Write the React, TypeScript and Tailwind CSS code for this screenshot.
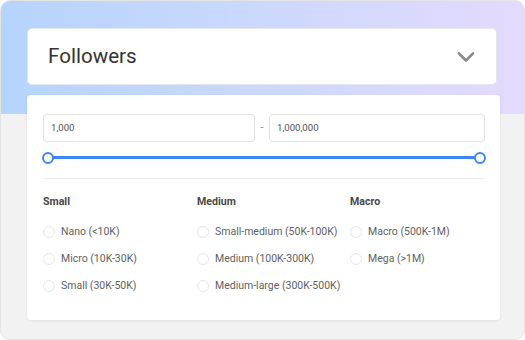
const groups = [
  { title: "Small", items: ["Nano (<10K)", "Micro (10K-30K)", "Small (30K-50K)"] },
  { title: "Medium", items: ["Small-medium (50K-100K)", "Medium (100K-300K)", "Medium-large (300K-500K)"] },
  { title: "Macro", items: ["Macro (500K-1M)", "Mega (>1M)"] },
];

const App = () => {
  return (
    <div className="w-[525px] h-[340px] bg-white font-['Roboto',sans-serif]">
      <div className="relative w-[525px] h-[340px] rounded-[10px] border border-[#e4e4e4] bg-[#f2f2f2] overflow-hidden">
        <div className="absolute inset-x-0 top-0 h-[113px] bg-[linear-gradient(to_right,#b5d4fd,#c9d8fc_45%,#e4dafd)]" />

        <div className="relative pt-[27px] pl-[26px]">
          <div className="w-[470px] h-[57px] bg-white rounded-[5px] border border-[#e6e6ee] flex items-center justify-between pl-[20px] pr-[21px]">
            <span className="text-[20.6px] text-[#333]">Followers</span>
            <svg width="18" height="12" viewBox="0 0 18 12" fill="none">
              <path d="M2 2.5 L9 9.5 L16 2.5" stroke="#8a8a92" strokeWidth="2.6" strokeLinecap="round" strokeLinejoin="round" />
            </svg>
          </div>

          <div className="mt-[10px] w-[473px] h-[225px] bg-white rounded-[4px] shadow-[0_1px_3px_rgba(0,0,0,0.08)] pl-[16px] pr-[15px] pt-[19px]">
            <div className="flex items-center">
              <div className="w-[212px] h-[28px] rounded-[4px] border border-[#e2e2e2] flex items-center pl-[7px] text-[9.6px] text-[#555]">
                1,000
              </div>
              <div className="w-[14px] text-center text-[11px] text-[#888]">-</div>
              <div className="flex-1 h-[28px] rounded-[4px] border border-[#e2e2e2] flex items-center pl-[7px] text-[9.6px] text-[#555]">
                1,000,000
              </div>
            </div>

            <div className="relative h-[12px] mt-[10px] mx-[-1px]">
              <div className="absolute left-[5px] right-[5px] top-[4px] h-[3px] bg-[#3d87f5] rounded-full" />
              <div className="absolute left-0 top-0 w-[12px] h-[12px] rounded-full bg-white border-2 border-[#3d87f5]" />
              <div className="absolute right-0 top-0 w-[12px] h-[12px] rounded-full bg-white border-2 border-[#3d87f5]" />
            </div>

            <div className="mt-[14px] border-t border-[#eeeeee]" />

            <div className="grid grid-cols-[154px_153px_1fr] pt-[16px]">
              {groups.map((g) => (
                <div key={g.title}>
                  <div className="text-[10.6px] font-bold text-[#484848] leading-[14px]">{g.title}</div>
                  <div className="mt-[17px] flex flex-col gap-[15px]">
                    {g.items.map((item) => (
                      <div key={item} className="flex items-center gap-[6px]">
                        <div className="w-[12px] h-[12px] rounded-full border border-[#e6e6e6]" />
                        <span className="text-[10.5px] text-[#5f5f5f] leading-[12px]">{item}</span>
                      </div>
                    ))}
                  </div>
                </div>
              ))}
            </div>
          </div>
        </div>
      </div>
    </div>
  );
};

export default App;
